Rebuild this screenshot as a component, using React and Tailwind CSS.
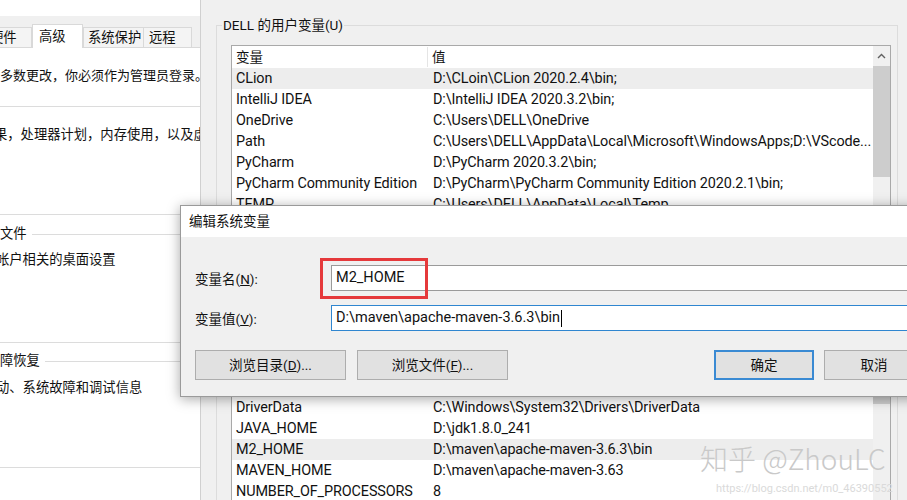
import React from "react";

const userVars = [
  ["CLion", "D:\\CLoin\\CLion 2020.2.4\\bin;"],
  ["IntelliJ IDEA", "D:\\IntelliJ IDEA 2020.3.2\\bin;"],
  ["OneDrive", "C:\\Users\\DELL\\OneDrive"],
  ["Path", "C:\\Users\\DELL\\AppData\\Local\\Microsoft\\WindowsApps;D:\\VScode..."],
  ["PyCharm", "D:\\PyCharm 2020.3.2\\bin;"],
  ["PyCharm Community Edition", "D:\\PyCharm\\PyCharm Community Edition 2020.2.1\\bin;"],
  ["TEMP", "C:\\Users\\DELL\\AppData\\Local\\Temp"],
  ["TMP", "C:\\Users\\DELL\\AppData\\Local\\Temp"],
];

const systemVars = [
  ["ComSpec", "C:\\Windows\\system32\\cmd.exe"],
  ["configsetroot", "C:\\Windows\\ConfigSetRoot"],
  ["CUDA_PATH", "C:\\Program Files\\NVIDIA GPU Computing Toolkit"],
  ["DriverData", "C:\\Windows\\System32\\Drivers\\DriverData"],
  ["JAVA_HOME", "D:\\jdk1.8.0_241"],
  ["M2_HOME", "D:\\maven\\apache-maven-3.6.3\\bin"],
  ["MAVEN_HOME", "D:\\maven\\apache-maven-3.63"],
  ["NUMBER_OF_PROCESSORS", "8"],
  ["OS", "Windows_NT"],
];

function ListBox({ rows, highlight, thumb }) {
  return (
    <div className="ml-[9px] w-[660px] h-[190px] border border-[#a9a9a9] bg-white flex overflow-hidden">
      <div className="flex-1 flex flex-col min-w-0">
        <div className="h-[22px] shrink-0 flex items-center text-[13.5px]">
          <div className="w-[196px] pl-[4px] border-r border-[#e5e5e5]">变量</div>
          <div className="pl-[4px]">值</div>
        </div>
        {rows.map(([name, value]) => (
          <div
            key={name}
            className={
              "h-[21px] shrink-0 flex items-center text-[14.4px] tracking-[-0.1px] whitespace-nowrap " +
              (name === highlight ? "bg-[#ededed]" : "")
            }
          >
            <div className="w-[200px] shrink-0 pl-[4px] overflow-hidden">{name}</div>
            <div className="pl-[1px]">{value}</div>
          </div>
        ))}
      </div>
      <div className="w-[17px] shrink-0 bg-[#f0f0f0] flex flex-col">
        <div className="h-[20px] flex items-center justify-center">
          <svg width="9" height="6" viewBox="0 0 9 6">
            <path d="M1 5 L4.5 1.5 L8 5" fill="none" stroke="#606060" strokeWidth="1.4" />
          </svg>
        </div>
        <div className={"bg-[#cdcdcd] " + thumb} />
      </div>
    </div>
  );
}

function Tab({ children, className }) {
  return (
    <div className={"shrink-0 border-x border-t border-[#d9d9d9] leading-[18px] whitespace-nowrap " + className}>
      {children}
    </div>
  );
}

export default function App() {
  return (
    <div className="relative w-[907px] h-[500px] overflow-hidden flex font-['Roboto','Noto_Sans_CJK_SC',sans-serif] text-[#111]">
      {/* left window: system properties */}
      <div className="w-[200px] shrink-0 bg-white flex flex-col overflow-hidden text-[13.3px]">
        <div className="h-[16px] shrink-0" />
        <div className="h-[32px] shrink-0 bg-[#f0f0f0] flex items-end border-b border-[#d9d9d9]">
          <Tab className="-ml-[17px] w-[49px] h-[20px] pt-[1px] pl-[6px] bg-[#f4f4f4]">硬件</Tab>
          <Tab className="w-[51px] h-[24px] pt-[3px] pl-[6px] bg-white -mb-px relative">高级</Tab>
          <Tab className="w-[61px] h-[20px] pt-[1px] pl-[4px] bg-[#f4f4f4]">系统保护</Tab>
          <Tab className="w-[48px] h-[20px] pt-[1px] pl-[5px] bg-[#f4f4f4] border-l-0">远程</Tab>
        </div>
        <p className="mt-[18px] leading-[20px] whitespace-nowrap text-[13px]">多数更改，你必须作为管理员登录。</p>
        <div className="mt-[20px] h-px bg-[#dcdcdc]" />
        <p className="mt-[18px] leading-[20px] whitespace-nowrap -ml-[6px]">果，处理器计划，内存使用，以及虚拟内存</p>
        <div className="mt-[69px] h-px bg-[#dcdcdc]" />
        <div className="mt-[9px] h-[20px] flex items-center">
          <span className="leading-[20px] whitespace-nowrap">文件</span>
          <div className="flex-1 ml-[5px] h-px bg-[#dcdcdc]" />
        </div>
        <p className="mt-[6px] leading-[20px] whitespace-nowrap -ml-[4px]">帐户相关的桌面设置</p>
        <div className="mt-[72px] h-px bg-[#dcdcdc]" />
        <div className="mt-[8px] h-[20px] flex items-center">
          <span className="leading-[20px] whitespace-nowrap">障恢复</span>
          <div className="flex-1 ml-[5px] h-px bg-[#dcdcdc]" />
        </div>
        <p className="mt-[7px] leading-[20px] whitespace-nowrap -ml-[4px]">动、系统故障和调试信息</p>
        <div className="mt-[69px] h-px bg-[#dcdcdc]" />
      </div>

      {/* right window: environment variables */}
      <div className="flex-1 bg-[#f0f0f0] border-l border-[#d0d0d0] pl-[15px] flex flex-col">
        <fieldset className="mt-[15px] w-[682px] border border-[#dcdcdc] pl-[5px] pb-[9px] shrink-0">
          <legend className="px-[1px] text-[13.5px] leading-[20px]">DELL 的用户变量(U)</legend>
          <div className="mt-[10px]">
            <ListBox rows={userVars} highlight="CLion" thumb="h-[111px]" />
          </div>
          <div className="mt-[8px] h-[26px] flex justify-end gap-[8px] pr-[6px] text-[13.5px]">
            <div className="w-[96px] border border-[#adadad] bg-[#e1e1e1] flex items-center justify-center">新建(N)...</div>
            <div className="w-[96px] border border-[#adadad] bg-[#e1e1e1] flex items-center justify-center">编辑(E)...</div>
            <div className="w-[96px] border border-[#adadad] bg-[#e1e1e1] flex items-center justify-center">删除(D)</div>
          </div>
        </fieldset>
        <fieldset className="mt-[2px] w-[682px] border border-[#dcdcdc] pl-[5px] shrink-0">
          <legend className="px-[1px] text-[13.5px] leading-[20px]">系统变量(S)</legend>
          <div className="mt-[10px]">
            <ListBox rows={systemVars} highlight="M2_HOME" thumb="h-[72px]" />
          </div>
        </fieldset>
      </div>

      {/* edit dialog */}
      <div className="absolute left-[180px] top-[205px] w-[760px] h-[192px] border border-[#9a9a9a] bg-[#f0f0f0] shadow-[0_2px_12px_rgba(0,0,0,0.35)] flex flex-col">
        <div className="h-[31px] shrink-0 bg-white pl-[8px] flex items-center text-[13.5px]">编辑系统变量</div>
        <div className="flex-1 px-[14px]">
          <div className="mt-[28px] flex items-center">
            <div className="w-[136px] shrink-0 text-[13.5px] leading-[20px] pt-[1px]">
              变量名(<span className="underline">N</span>):
            </div>
            <div className="flex-1 h-[26px] border border-[#9a9a9a] bg-white pl-[4px] flex items-center text-[14.5px]">
              M2_HOME
            </div>
          </div>
          <div className="mt-[14px] flex items-center">
            <div className="w-[136px] shrink-0 text-[13.5px] leading-[20px] pt-[1px]">
              变量值(<span className="underline">V</span>):
            </div>
            <div className="flex-1 h-[26px] border border-[#2f86d0] bg-white pl-[4px] flex items-center text-[14.5px]">
              D:\maven\apache-maven-3.6.3\bin
              <span className="ml-[1px] w-px h-[17px] bg-black" />
            </div>
          </div>
          <div className="mt-[19px] h-[30px] flex text-[13.5px]">
            <div className="w-[151px] border border-[#adadad] bg-[#e1e1e1] flex items-center justify-center">
              浏览目录(<span className="underline">D</span>)...
            </div>
            <div className="ml-[11px] w-[151px] border border-[#adadad] bg-[#e1e1e1] flex items-center justify-center">
              浏览文件(<span className="underline">F</span>)...
            </div>
            <div className="ml-[206px] w-[100px] border-2 border-[#3a8ad3] bg-[#e1e1e1] flex items-center justify-center">
              确定
            </div>
            <div className="ml-[10px] w-[100px] border border-[#adadad] bg-[#e1e1e1] flex items-center justify-center">
              取消
            </div>
          </div>
        </div>
      </div>

      {/* red highlight around the variable name */}
      <div className="absolute left-[320px] top-[258px] w-[108px] h-[41px] border-[3px] border-[#e5393b]" />

      {/* watermark */}
      <div className="absolute left-[700px] top-[440px] text-[28px] leading-[36px] text-[#c9c9c9] whitespace-nowrap font-['Noto_Sans_CJK_SC',sans-serif] font-light">
        知乎 @ZhouLC
      </div>
      <div className="absolute left-[716px] top-[482px] text-[11px] leading-[14px] text-[#dadada] whitespace-nowrap">
        https://blog.csdn.net/m0_46390552
      </div>
    </div>
  );
}
